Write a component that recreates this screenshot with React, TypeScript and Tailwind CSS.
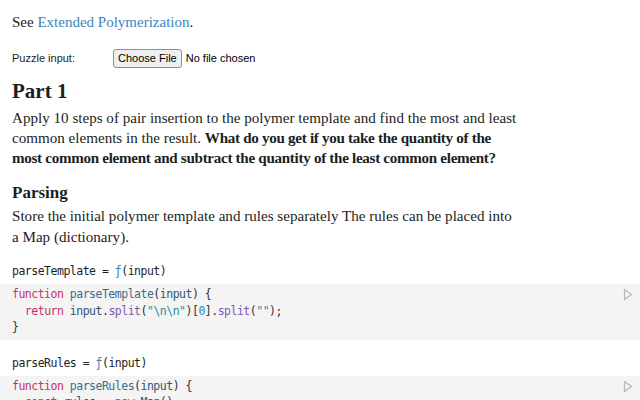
import React from "react";

const serif = { fontFamily: '"Liberation Serif", serif' };

const PlayIcon = () => (
  <svg width="10" height="13" viewBox="0 0 10 13" className="absolute right-[7px] top-[4px]">
    <path d="M1.5 1.5 L8.5 6.5 L1.5 11.5 Z" fill="none" stroke="#b8b8b8" strokeWidth="1.3" strokeLinejoin="round" />
  </svg>
);

const K = ({ children }: { children: React.ReactNode }) => <span className="text-[#c8306f]">{children}</span>;
const D = ({ children }: { children: React.ReactNode }) => <span className="text-[#3c6a8c]">{children}</span>;
const V = ({ children }: { children: React.ReactNode }) => <span className="text-[#2f5577]">{children}</span>;
const P = ({ children }: { children: React.ReactNode }) => <span className="text-[#7c57b8]">{children}</span>;
const S = ({ children }: { children: React.ReactNode }) => <span className="text-[#2b8da3]">{children}</span>;

const CellLabel = ({ name }: { name: string }) => (
  <div className="px-3 h-[24px] flex items-center text-[#1b1e23] whitespace-pre">
    {name} = <span className="text-[#3182bd]">ƒ</span>(input)
  </div>
);

const Code = ({ children }: { children: React.ReactNode }) => (
  <div className="relative bg-[#f4f4f4] rounded-r-[4px] px-3 pt-[2px] pb-[4px] leading-[16.5px] text-[#333] whitespace-pre">
    {children}
    <PlayIcon />
  </div>
);

export default function App() {
  return (
    <div className="w-[640px] h-[400px] overflow-hidden bg-white text-[#1b1e23]">
      <p className="px-3 pt-[12px] text-[15px] leading-[20px]" style={serif}>
        See <a className="text-[#3b84bf]">Extended Polymerization</a>.
      </p>

      <div className="flex items-center px-3 mt-[16px] h-[20px] text-[11px]" style={{ fontFamily: '"Liberation Sans", Arial, sans-serif' }}>
        <span className="w-[101px]">Puzzle input:</span>
        <button className="h-[19px] px-[4px] border border-[#8f8f8f] rounded-[3px] bg-[#efefef] text-[11px] text-black">
          Choose File
        </button>
        <span className="ml-[4px] text-black">No file chosen</span>
      </div>

      <h1 className="px-3 mt-[10px] text-[21px] leading-[26px] font-bold" style={serif}>Part 1</h1>
      <p className="px-3 mt-[4px] text-[15.1px] leading-[20px] w-[540px]" style={serif}>
        Apply 10 steps of pair insertion to the polymer template and find the most and least
        <br />
        common elements in the result.{" "}
        <b className="tracking-[-0.3px]">What do you get if you take the quantity of the</b>
        <br />
        <b className="tracking-[-0.3px]">most common element and subtract the quantity of the least common element?</b>
      </p>

      <h2 className="px-3 mt-[14px] text-[17px] leading-[22px] font-bold" style={serif}>Parsing</h2>
      <p className="px-3 mt-[2px] text-[15.1px] leading-[21px] w-[540px]" style={serif}>
        Store the initial polymer template and rules separately The rules can be placed into
        <br />
        a Map (dictionary).
      </p>

      <div
        className="mt-[12px] text-[11.5px] tracking-[-0.5px]"
        style={{ fontFamily: '"DejaVu Sans Mono", monospace' }}
      >
        <CellLabel name="parseTemplate" />
        <Code>
          <K>function</K> <D>parseTemplate</D>(<V>input</V>) {"{"}
          {"\n  "}
          <K>return</K> <V>input</V>.<P>split</P>(<S>"\n\n"</S>)[<S>0</S>].<P>split</P>(<S>""</S>);
          {"\n}"}
        </Code>
        <div className="h-[12px]" />
        <CellLabel name="parseRules" />
        <Code>
          <K>function</K> <D>parseRules</D>(<V>input</V>) {"{"}
          {"\n  "}
          <K>const</K> <V>rules</V> = <K>new</K> <V>Map</V>();
        </Code>
      </div>
    </div>
  );
}
